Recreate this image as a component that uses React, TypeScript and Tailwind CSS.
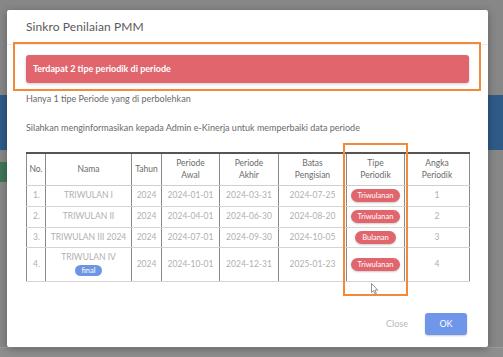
import React from 'react';

type Row = {
  no: string;
  nama: string;
  final?: boolean;
  tahun: string;
  awal: string;
  akhir: string;
  batas: string;
  tipe: string;
  angka: string;
  h: string;
};

const rows: Row[] = [
  { no: '1.', nama: 'TRIWULAN I', tahun: '2024', awal: '2024-01-01', akhir: '2024-03-31', batas: '2024-07-25', tipe: 'Triwulanan', angka: '1', h: 'h-[21px]' },
  { no: '2.', nama: 'TRIWULAN II', tahun: '2024', awal: '2024-04-01', akhir: '2024-06-30', batas: '2024-08-20', tipe: 'Triwulanan', angka: '2', h: 'h-[21px]' },
  { no: '3.', nama: 'TRIWULAN III 2024', tahun: '2024', awal: '2024-07-01', akhir: '2024-09-30', batas: '2024-10-05', tipe: 'Bulanan', angka: '3', h: 'h-[20px]' },
  { no: '4.', nama: 'TRIWULAN IV', final: true, tahun: '2024', awal: '2024-10-01', akhir: '2024-12-31', batas: '2025-01-23', tipe: 'Triwulanan', angka: '4', h: 'h-[34px]' },
];

const font = { fontFamily: 'Lato, "Open Sans", sans-serif' };

export default function App() {
  return (
    <div className="relative w-[503px] h-[357px] overflow-hidden bg-[#878787]" style={font}>
      {/* Page behind the backdrop */}
      <div className="flex h-[347px]">
        <div className="w-[7px] flex flex-col">
          <div className="mt-[95px] h-[55px] bg-[#2f5a88]" />
          <div className="mt-[12px] h-[20px] bg-[#3f7656]" />
        </div>
        <div className="flex-1" />
        <div className="w-[15px] flex flex-col">
          <div className="mt-[95px] h-[55px] bg-[#2f5a88]" />
        </div>
      </div>
      <div className="h-[10px] bg-[#8e8e8e] border-t border-[#9a9a9a]" />

      {/* Modal */}
      <div className="absolute left-[7px] top-[10px] w-[481px] h-[337px] bg-white rounded-[2px] shadow-[0_2px_8px_rgba(0,0,0,0.3)] flex flex-col">
        <div className="h-[35px] border-b border-[#ececec] px-[19px] flex items-center">
          <span className="text-[12px] text-[#5a5a5a] tracking-[0.1px]">Sinkro Penilaian PMM</span>
        </div>
        <div className="px-[19px] pt-[10px]">
          <div className="h-[28px] rounded-[3px] bg-[#e1656d] shadow-[0_1px_3px_rgba(0,0,0,0.2)] flex items-center pl-[7px]">
            <span className="text-[9px] font-bold text-white">Terdapat 2 tipe periodik di periode</span>
          </div>
          <p className="mt-[10px] text-[9px] text-[#6a6a6a] leading-[12px]">Hanya 1 tipe Periode yang di perbolehkan</p>
          <p className="mt-[17px] text-[9px] text-[#6a6a6a] leading-[12px]">Silahkan menginformasikan kepada Admin e-Kinerja untuk memperbaiki data periode</p>

          <table className="mt-[18px] w-[443px] border-collapse table-fixed text-[8.5px]">
            <colgroup>
              <col className="w-[19px]" />
              <col className="w-[86px]" />
              <col className="w-[30px]" />
              <col className="w-[58px]" />
              <col className="w-[59px]" />
              <col className="w-[68px]" />
              <col className="w-[58px]" />
              <col className="w-[65px]" />
            </colgroup>
            <thead>
              <tr className="h-[32px] border-t-2 border-[#555] text-[#6a6a6a] leading-[12px]">
                <th className="font-normal border-l border-r border-[#8a8a8a] border-b border-b-[#cfcfcf]">No.</th>
                <th className="font-normal border-r border-[#8a8a8a] border-b border-b-[#cfcfcf]">Nama</th>
                <th className="font-normal border-r border-[#8a8a8a] border-b border-b-[#cfcfcf]">Tahun</th>
                <th className="font-normal border-r border-[#8a8a8a] border-b border-b-[#cfcfcf]">Periode<br />Awal</th>
                <th className="font-normal border-r border-[#8a8a8a] border-b border-b-[#cfcfcf]">Periode<br />Akhir</th>
                <th className="font-normal border-r border-[#8a8a8a] border-b border-b-[#cfcfcf]">Batas<br />Pengisian</th>
                <th className="font-normal border-r border-[#8a8a8a] border-b border-b-[#cfcfcf]">Tipe<br />Periodik</th>
                <th className="font-normal border-r border-[#8a8a8a] border-b border-b-[#cfcfcf]">Angka<br />Periodik</th>
              </tr>
            </thead>
            <tbody className="text-[#b0b0b0]">
              {rows.map((r) => (
                <tr key={r.no} className={`${r.h} text-center`}>
                  <td className="text-left pl-[6px] border-l border-r border-[#8a8a8a] border-b border-b-[#d4d4d4]">{r.no}</td>
                  <td className="border-r border-[#8a8a8a] border-b border-b-[#d4d4d4] leading-[11px]">
                    <div>{r.nama}</div>
                    {r.final && (
                      <span className="inline-block mt-[2px] px-[7px] h-[11px] leading-[11px] rounded-full bg-[#6d95e3] text-white text-[7.5px]">final</span>
                    )}
                  </td>
                  <td className="border-r border-[#8a8a8a] border-b border-b-[#d4d4d4]">{r.tahun}</td>
                  <td className="border-r border-[#8a8a8a] border-b border-b-[#d4d4d4]">{r.awal}</td>
                  <td className="border-r border-[#8a8a8a] border-b border-b-[#d4d4d4]">{r.akhir}</td>
                  <td className="border-r border-[#8a8a8a] border-b border-b-[#d4d4d4]">{r.batas}</td>
                  <td className="border-r border-[#8a8a8a] border-b border-b-[#d4d4d4]">
                    <span className="inline-block px-[7px] h-[13px] leading-[13px] rounded-full bg-[#e1656d] text-white text-[7.5px] shadow-[0_1px_2px_rgba(0,0,0,0.2)]">{r.tipe}</span>
                  </td>
                  <td className="border-r border-[#8a8a8a] border-b border-b-[#d4d4d4]">{r.angka}</td>
                </tr>
              ))}
            </tbody>
          </table>
        </div>

        <div className="mt-auto mb-[12px] flex items-center justify-end gap-[17px] pr-[21px]">
          <span className="text-[9px] text-[#b8b8b8]">Close</span>
          <div className="w-[42px] h-[22px] rounded-[3px] bg-[#6f96e8] flex items-center justify-center shadow-[0_1px_2px_rgba(0,0,0,0.2)]">
            <span className="text-[9px] text-white">OK</span>
          </div>
        </div>
      </div>

      {/* Annotation boxes */}
      <div className="absolute left-[13px] top-[42px] w-[468px] h-[49px] border-2 border-solid border-[#f28a3a]" />
      <div className="absolute left-[343px] top-[143px] w-[65px] h-[153px] border-2 border-solid border-[#f28a3a]" />

      {/* Mouse cursor */}
      <svg className="absolute left-[371px] top-[283px]" width="8" height="12" viewBox="0 0 8 12">
        <path d="M0.5 0.5 L0.5 9.5 L2.6 7.6 L4.1 11 L5.4 10.4 L3.9 7.1 L6.8 7.1 Z" fill="#fff" stroke="#777" strokeWidth="0.8" strokeLinejoin="round" />
      </svg>
    </div>
  );
}
